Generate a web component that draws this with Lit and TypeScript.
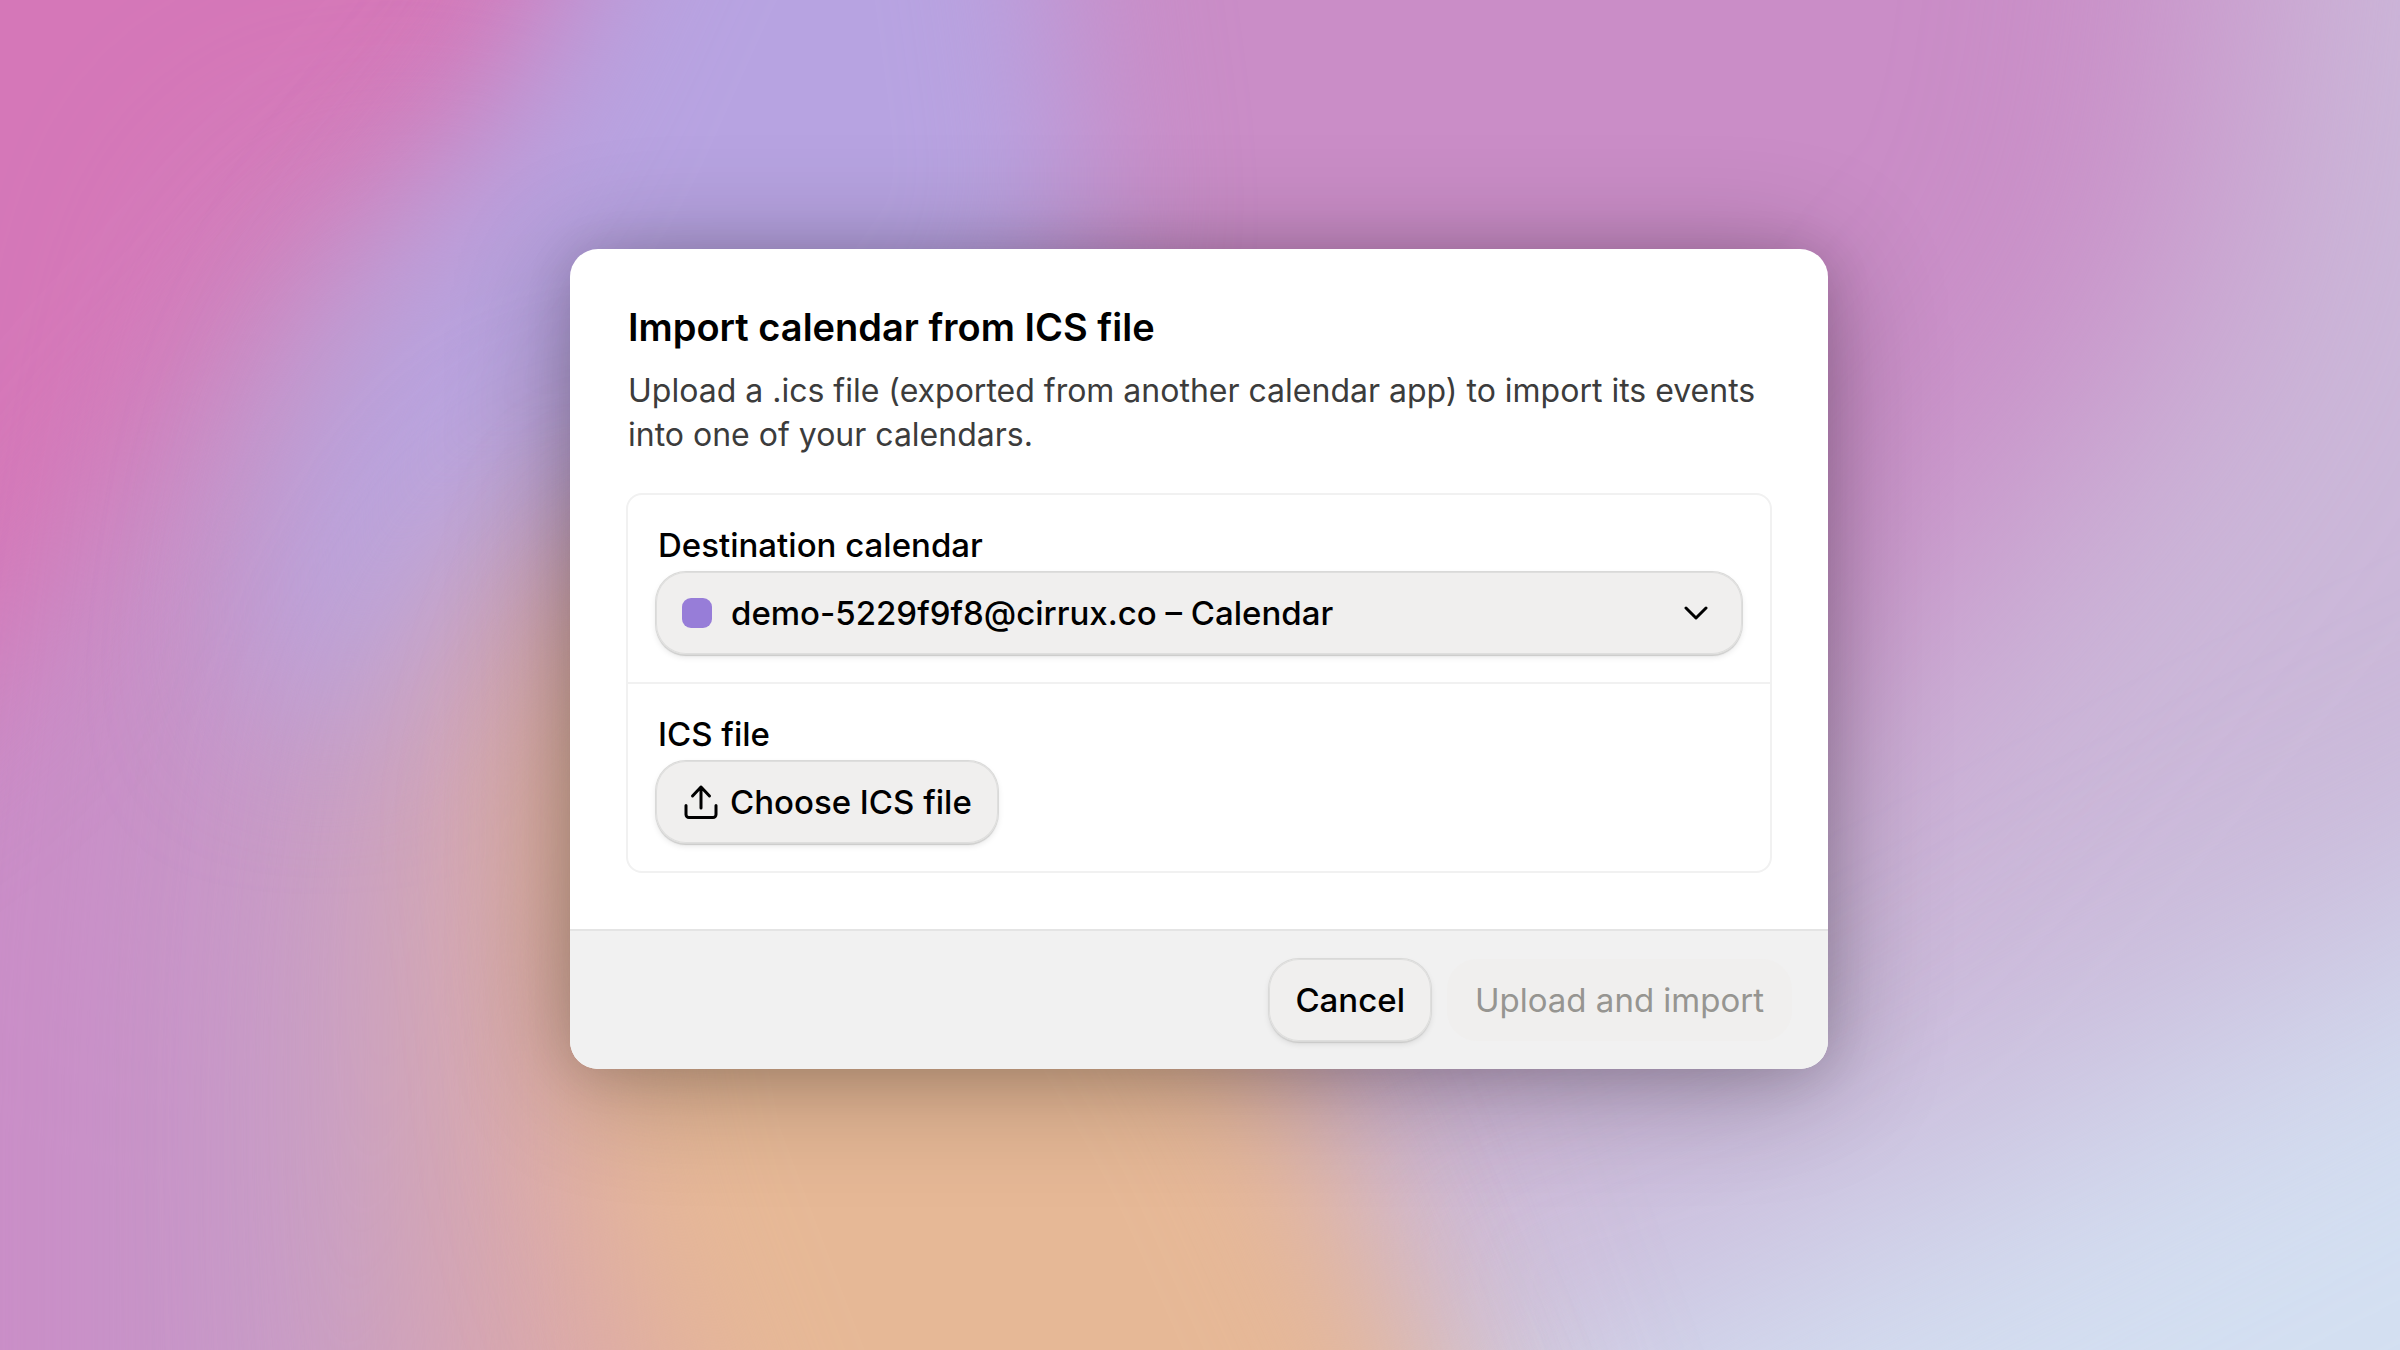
import { LitElement, html, css } from "lit";
import { customElement, state } from "lit/decorators.js";

@customElement("app-root")
export class AppRoot extends LitElement {
  @state() private fileName = "";

  static styles = css`
    :host {
      display: block;
      font-family: Inter, "Liberation Sans", sans-serif;
      font-size: 33px;
      line-height: 44px;
      color: #000;
    }
    *,
    *::before {
      box-sizing: border-box;
    }
    .stage {
      position: relative;
      isolation: isolate;
      min-height: 100vh;
      overflow: hidden;
      display: flex;
      flex-direction: column;
      align-items: center;
      justify-content: center;
      padding: 32px 34px 64px 32px;
      background: #ca8fc8;
    }
    .wallpaper {
      position: absolute;
      inset: 0;
      width: 100%;
      height: 100%;
      z-index: -1;
    }
    .dialog {
      width: 100%;
      max-width: 1258px;
      border-radius: 28px;
      background: #fff;
      overflow: hidden;
      box-shadow: 0 12px 120px rgba(0, 0, 0, 0.3), 0 4px 48px rgba(0, 0, 0, 0.12);
    }
    .body {
      padding: 56px;
    }
    .intro {
      padding: 0 2px;
      margin-bottom: 36px;
    }
    h1 {
      margin: 0;
      padding-bottom: 20px;
      font-size: 38px;
      line-height: 44px;
      font-weight: 600;
    }
    p {
      margin: 0;
      font-size: 32px;
      color: #3c3c3c;
    }
    .fields {
      border: 2px solid #f1f1f1;
      border-radius: 16px;
    }
    .field {
      display: flex;
      flex-direction: column;
      align-items: flex-start;
      gap: 5px;
      padding: 28px;
    }
    .field + .field {
      border-top: 2px solid #f1f1f1;
    }
    label {
      padding: 0 2px;
      font-weight: 500;
    }
    .control {
      font: inherit;
      font-weight: 500;
      color: #000;
      height: 82px;
      border: 0;
      margin: 0;
      border-radius: 30px;
      padding: 0 26px;
      background: #f0efee;
      box-shadow: 0 0 0 1px #d9d9d8, inset 0 0 0 1px #dededd, 0 2px 1px #c9c9c8, 0 3px 6px rgba(0, 0, 0, 0.1);
    }
    .picker {
      position: relative;
      width: 100%;
    }
    .picker select {
      appearance: none;
      display: block;
      width: 100%;
      padding: 0 75px;
    }
    .swatch {
      position: absolute;
      left: 26px;
      top: 26px;
      width: 30px;
      height: 30px;
      border-radius: 9px;
      background: #977dd8;
      pointer-events: none;
    }
    .chevron {
      position: absolute;
      right: 34px;
      top: 28px;
      width: 24px;
      height: 24px;
      pointer-events: none;
    }
    .file {
      display: flex;
      align-items: center;
      gap: 12px;
    }
    .file svg {
      width: 36px;
      height: 36px;
    }
    svg.line {
      fill: none;
      stroke: currentColor;
      stroke-linecap: round;
      stroke-linejoin: round;
      stroke-width: 3;
    }
    footer {
      display: flex;
      flex-wrap: wrap;
      justify-content: flex-end;
      gap: 16px;
      padding: 28px 36px;
      border-top: 2px solid #e4e4e4;
      background: #f1f1f1;
    }
    .control:disabled {
      padding: 0 28px;
      color: #969591;
      box-shadow: none;
      font-weight: 400;
    }
  `;

  private choose() {
    this.renderRoot.querySelector<HTMLInputElement>("#ics-input")?.click();
  }

  private picked(e: Event) {
    this.fileName = (e.target as HTMLInputElement).files?.[0]?.name ?? "";
  }

  render() {
    return html`
      <div class="stage">
        <svg class="wallpaper" viewBox="0 0 2400 1350" preserveAspectRatio="none" aria-hidden="true">
          <defs>
            <filter id="soft" x="-50%" y="-50%" width="200%" height="200%" color-interpolation-filters="sRGB"><feGaussianBlur stdDeviation="75" /></filter>
            <filter id="wide" x="-50%" y="-50%" width="200%" height="200%" color-interpolation-filters="sRGB"><feGaussianBlur stdDeviation="140" /></filter>
          </defs>
          <rect width="2400" height="1350" fill="#ca8dc7" />
          <path filter="url(#wide)" fill="#cbb8d9" d="M2900 -400 L2280 -400 L2200 300 L1910 640 L1700 860 L1100 1000 L1300 1800 L2900 1800Z" />
          <path filter="url(#wide)" fill="#d3dff1" d="M2900 700 L2380 950 L1930 1180 L1400 1430 L1400 1900 L2900 1900Z" />
          <path filter="url(#soft)" fill="#d577b8" d="M-300 -300 L740 -300 L540 60 L330 270 L160 450 L-40 700 L-300 900Z" />
          <path filter="url(#wide)" fill="#c2a5cc" opacity="0.75" d="M300 200 L600 300 L640 800 L420 1700 L190 1700 L190 1000 L240 600Z" />
          <path filter="url(#soft)" fill="#b7a3e1" d="M660 -200 L1030 -200 L1090 250 L900 520 L480 560 L380 720 L250 720 L290 480 L370 300 L520 110Z" />
          <path filter="url(#wide)" fill="#e6b79a" opacity="0.75" d="M600 480 L1050 700 L1270 1080 L1500 1700 L460 1700 L420 1180 L430 780Z" />
          <path filter="url(#soft)" fill="#e6b896" d="M640 520 L1050 700 L1270 1080 L1500 1600 L760 1600 L600 1180 L550 800Z" />
        </svg>
        <section class="dialog" role="dialog" aria-modal="true" aria-labelledby="title">
          <div class="body">
            <div class="intro">
              <h1 id="title">Import calendar from ICS file</h1>
              <p>Upload a .ics file (exported from another calendar app) to import its events into one of your calendars.</p>
            </div>
            <div class="fields">
              <div class="field">
                <label for="destination">Destination calendar</label>
                <div class="picker">
                  <select id="destination" class="control">
                    <option>demo-5229f9f8@cirrux.co – Calendar</option>
                  </select>
                  <span class="swatch"></span>
                  <svg class="chevron line" viewBox="0 0 24 24" aria-hidden="true"><path d="M2 8l10 10 10-10" /></svg>
                </div>
              </div>
              <div class="field">
                <label for="ics-button">ICS file</label>
                <input id="ics-input" type="file" accept=".ics" hidden @change=${this.picked} />
                <button id="ics-button" class="control file" @click=${this.choose}>
                  <svg class="line" viewBox="0 0 36 36" aria-hidden="true">
                    <path d="M19 24V3M10.500 12L19 3l8.500 9M4 21.500v9a3 3 0 0 0 3 3h24a3 3 0 0 0 3-3v-9" />
                  </svg>
                  Choose ICS file
                </button>
              </div>
            </div>
          </div>
          <footer>
            <button class="control">Cancel</button>
            <button class="control" ?disabled=${!this.fileName}>Upload and import</button>
          </footer>
        </section>
      </div>
    `;
  }
}
